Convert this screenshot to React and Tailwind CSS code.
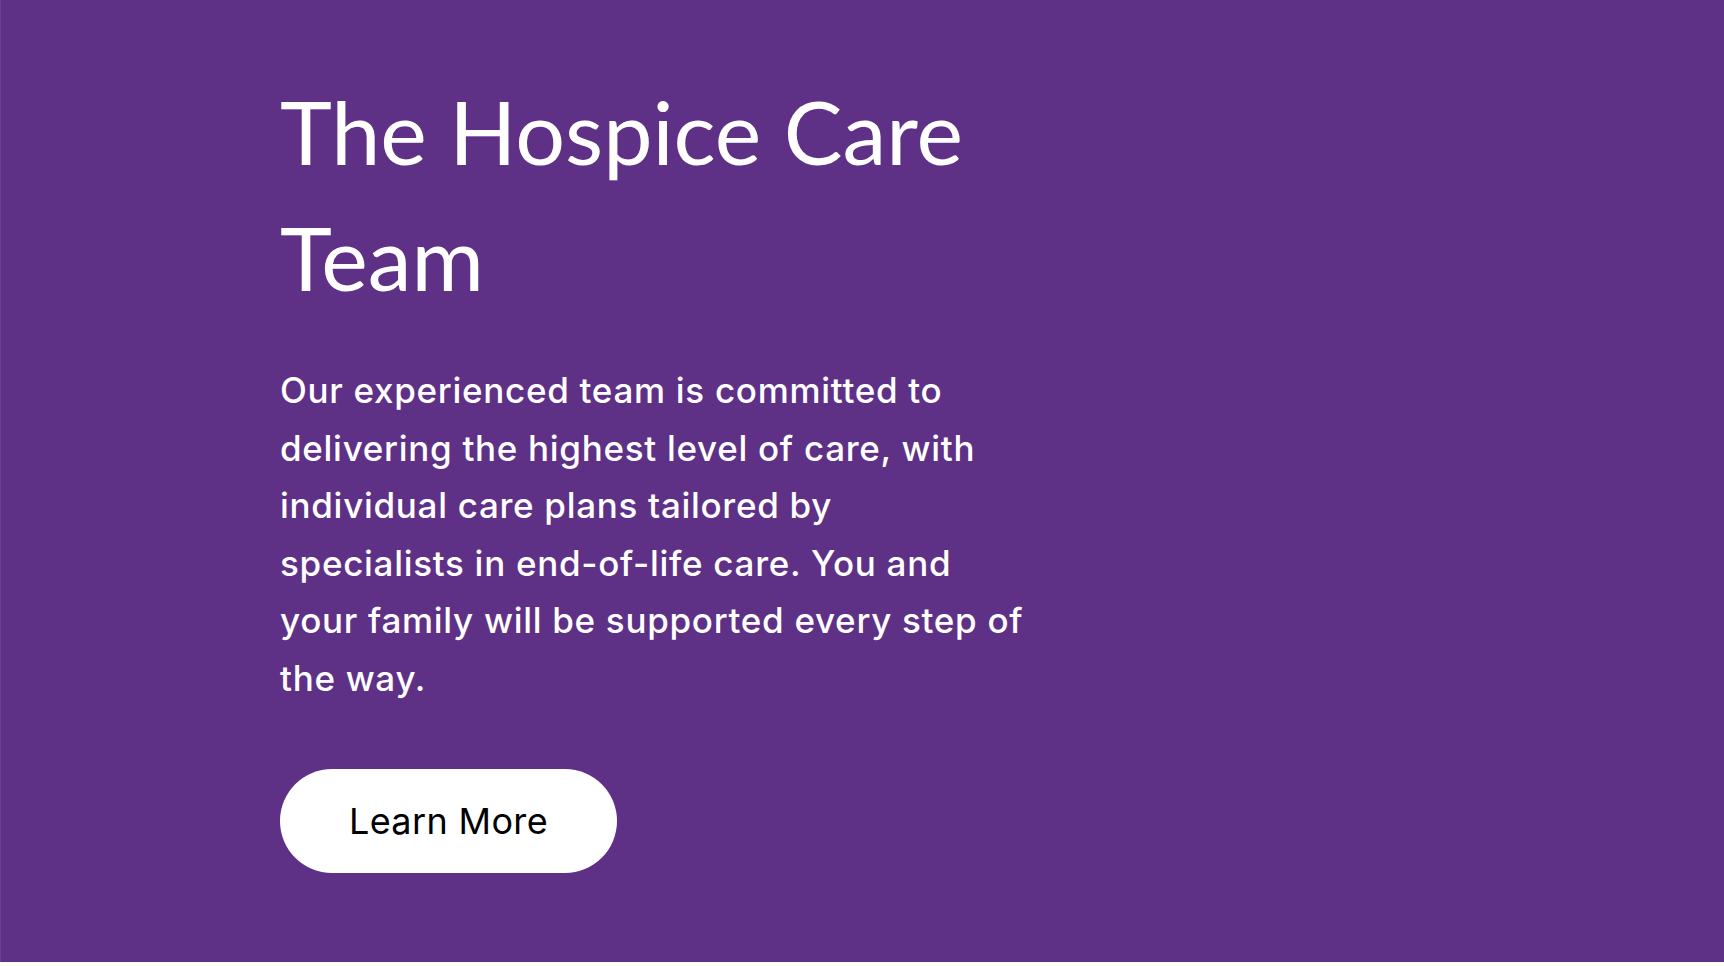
export default function App() {
  return (
    <div className="w-full bg-white">
      <section className="h-[962px] bg-[#5e3187] border-l border-[#6b4393] pl-[279px] pt-[68px]">
        <h1 className="font-['Lato',sans-serif] text-[88px] leading-[126px] font-normal text-white">
          The Hospice Care
          <br />
          Team
        </h1>
        <p className="mt-[42px] font-['Inter',sans-serif] text-[35px] leading-[57.5px] font-medium text-white tracking-[0.02em]">
          Our experienced team is committed to
          <br />
          delivering the highest level of care, with
          <br />
          individual care plans tailored by
          <br />
          specialists in end-of-life care. You and
          <br />
          your family will be supported every step of
          <br />
          the way.
        </p>
        <button className="mt-[62px] w-[337px] h-[104px] rounded-full bg-white flex items-center justify-center font-['Inter',sans-serif] text-[36px] font-normal text-black tracking-[0.01em]">
          Learn More
        </button>
      </section>
    </div>
  );
}
